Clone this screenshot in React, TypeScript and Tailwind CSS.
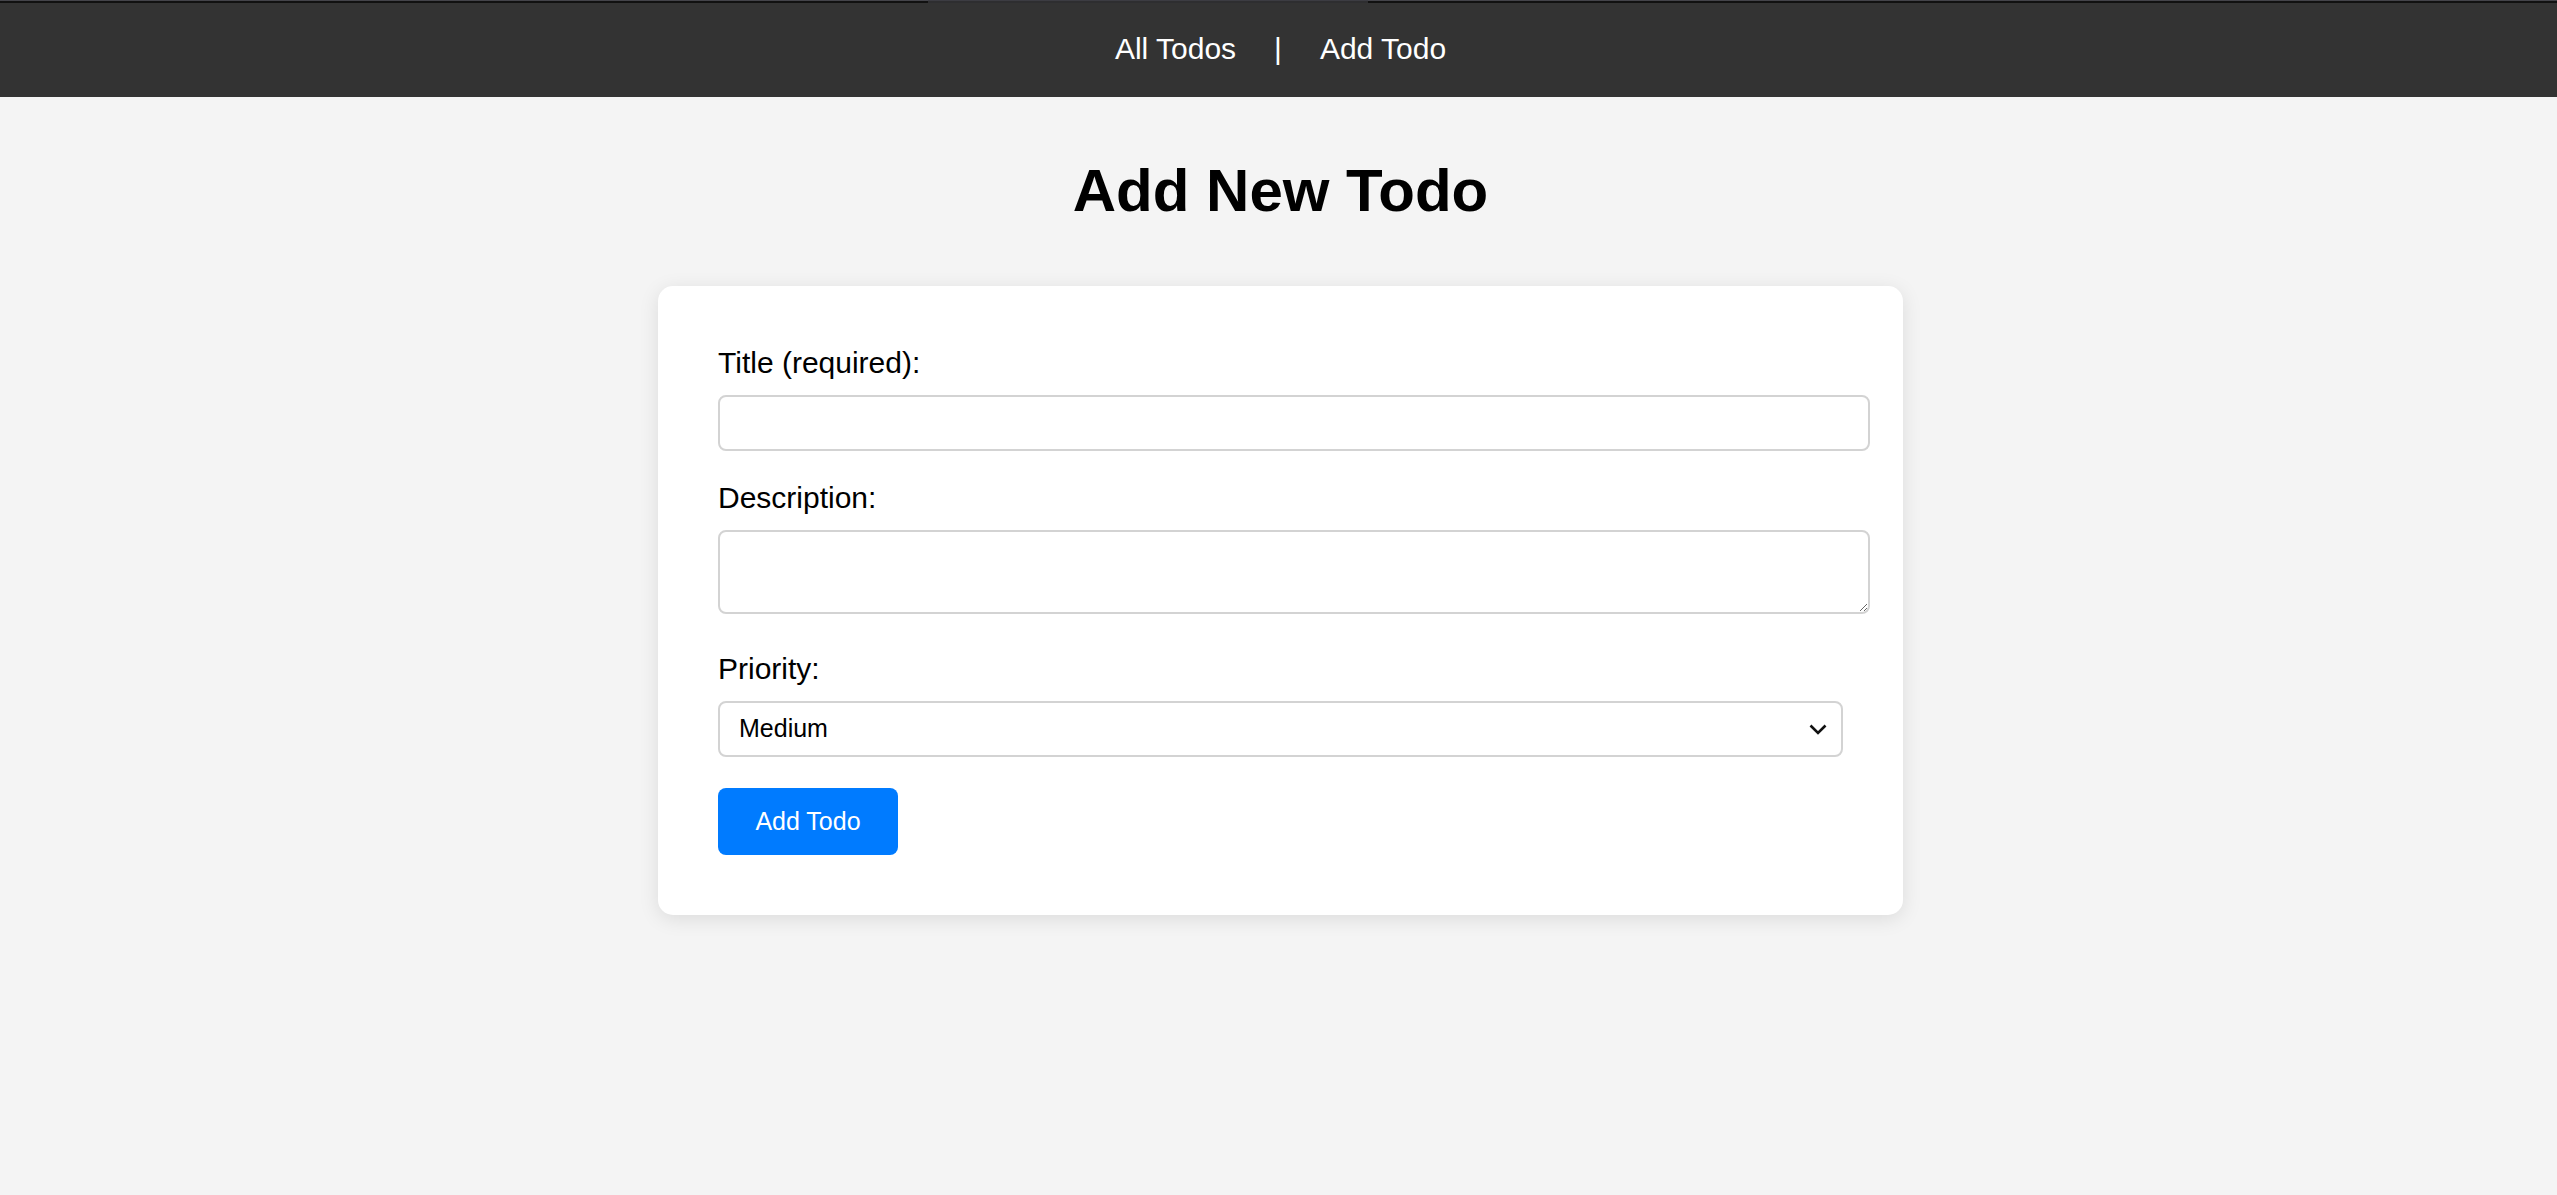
import React from "react";

export default function App() {
  return (
    <div className="min-h-[1195px] w-full bg-[#f4f4f4] font-['Liberation_Sans',Arial,sans-serif] text-black">
      <nav className="relative flex h-[97px] items-center justify-center bg-[#333333] pl-[4px] text-[30px] text-white">
        <div className="absolute left-0 top-0 flex h-[3px] w-full">
          <div className="h-full w-[928px] border-t border-[#44444a] bg-[#111]" />
          <div className="h-full w-[440px] border-t border-[#3c3c42] bg-[#2e2e30]" />
          <div className="h-full flex-1 border-t border-[#44444a] bg-[#111]" />
        </div>
        <div className="flex items-center gap-[38px] leading-none">
          <span>All Todos</span>
          <span>|</span>
          <span>Add Todo</span>
        </div>
      </nav>
      <main className="flex flex-col items-center pl-[4px]">
        <h1 className="mt-[59px] text-[60px] font-bold leading-[69px]">Add New Todo</h1>
        <form
          className="mt-[61px] w-[1245px] rounded-[15px] bg-white p-[60px] shadow-[0_4px_20px_rgba(0,0,0,0.1)]"
          onSubmit={(e) => e.preventDefault()}
        >
          <label className="block text-[30px] leading-[34px]">Title (required):</label>
          <input
            type="text"
            className="mt-[15px] box-border block h-[56px] w-[1152px] rounded-[8px] border-2 border-[#d3d3d3] bg-white px-[15px] text-[25px] outline-none"
          />
          <label className="mt-[30px] block text-[30px] leading-[34px]">Description:</label>
          <textarea
            className="mt-[15px] box-border block h-[84px] w-[1152px] rounded-[8px] border-2 border-[#d3d3d3] bg-white px-[15px] py-[8px] text-[25px] outline-none"
          />
          <label className="mt-[38px] block text-[30px] leading-[34px]">Priority:</label>
          <div className="relative mt-[15px] w-[1125px]">
            <select
              defaultValue="medium"
              className="box-border block h-[56px] w-full appearance-none rounded-[8px] border-2 border-[#d3d3d3] bg-white pl-[19px] text-[25px] text-black outline-none"
            >
              <option value="low">Low</option>
              <option value="medium">Medium</option>
              <option value="high">High</option>
            </select>
            <svg
              className="pointer-events-none absolute right-[16px] top-[23px]"
              width="18"
              height="11"
              viewBox="0 0 18 11"
              fill="none"
            >
              <path d="M1.5 1.5 L9 9 L16.5 1.5" stroke="#111" strokeWidth="2.6" />
            </svg>
          </div>
          <button
            type="submit"
            className="mt-[31px] block h-[67px] w-[180px] rounded-[8px] bg-[#007bff] text-[25px] text-white"
          >
            Add Todo
          </button>
        </form>
      </main>
    </div>
  );
}
